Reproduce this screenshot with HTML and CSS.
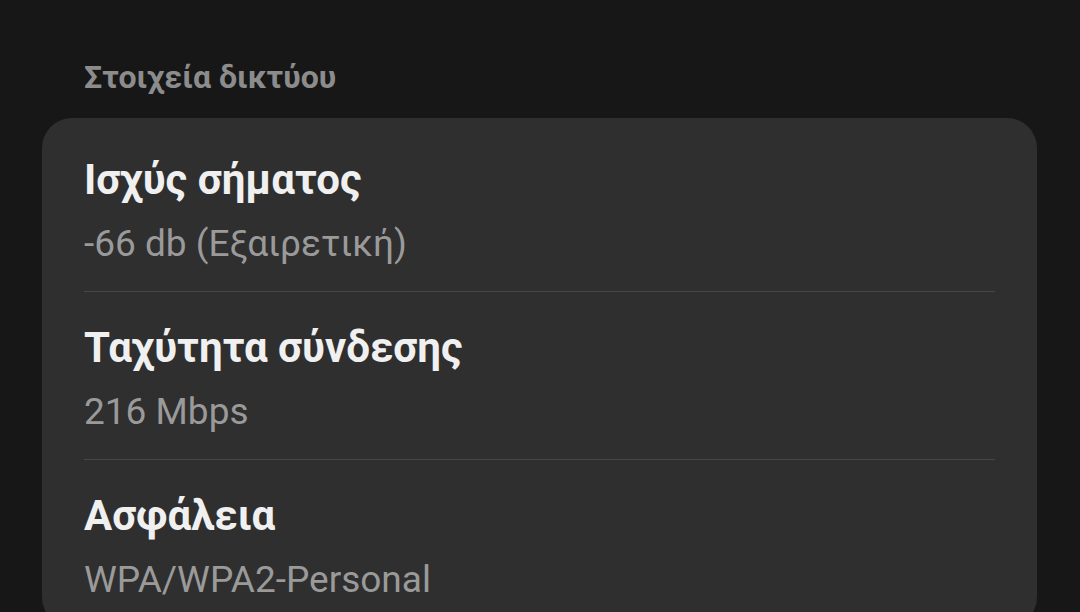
FILE: index.html
```html
<!DOCTYPE html>
<html lang="el">
<head>
    <meta charset="UTF-8">
    <meta name="viewport" content="width=device-width, initial-scale=1.0">
    <title>Στοιχεία δικτύου</title>
    <link rel="stylesheet" href="styles.css">
</head>
<body>
    <div class="page">
        <h2 class="section-title">Στοιχεία δικτύου</h2>

        <div class="info-card">
            <div class="info-row">
                <div class="info-label">Ισχύς σήματος</div>
                <div class="info-value">-66 db (Εξαιρετική)</div>
            </div>
            <div class="info-row">
                <div class="info-label">Ταχύτητα σύνδεσης</div>
                <div class="info-value">216 Mbps</div>
            </div>
            <div class="info-row">
                <div class="info-label">Ασφάλεια</div>
                <div class="info-value">WPA/WPA2-Personal</div>
            </div>
        </div>
    </div>
</body>
</html>
```

FILE: styles.css
```css
/* styles.css */
html, body {
    margin: 0;
    height: 100%;
    overflow: hidden;
    background-color: #171717;
}

body {
    font-family: Roboto, "Noto Sans", sans-serif;
}

.page {
    padding: 0 43px 0 42px;
}

.section-title {
    margin: 0;
    padding: 58px 0 22px 42px;
    font-size: 32px;
    line-height: 38px;
    font-weight: 700;
    color: #8c8c8c;
}

.info-card {
    background-color: #2f2f2f;
    border-radius: 30px;
    padding: 6px 42px 0;
}

.info-row {
    padding: 31px 0 25px;
    border-bottom: 1px solid #474747;
}

.info-row:last-child {
    border-bottom: none;
}

.info-label {
    font-size: 42px;
    line-height: 50px;
    font-weight: 700;
    color: #f0f0f0;
}

.info-value {
    margin-top: 17px;
    font-size: 37px;
    line-height: 44px;
    color: #9a9a9a;
}
```
